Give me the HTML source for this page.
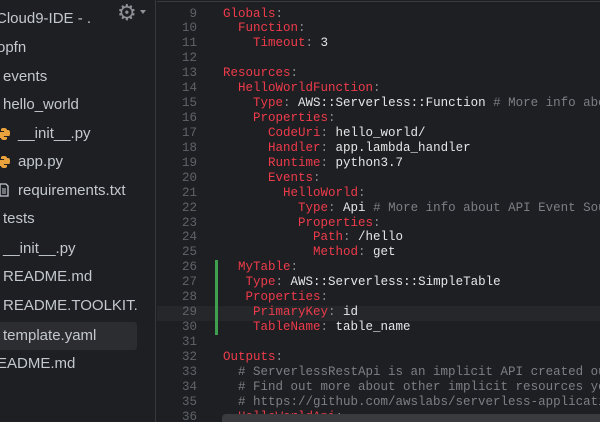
<!DOCTYPE html>
<html><head><meta charset="utf-8"><style>
*{margin:0;padding:0;box-sizing:border-box}
html,body{width:600px;height:422px;overflow:hidden}
body{background:#1e1f22;position:relative;font-family:"Liberation Sans",sans-serif}
#side{position:absolute;left:0;top:0;width:156px;height:422px;background:#1e1f22;border-right:1px solid #37383b;overflow:hidden}
.it{position:absolute;left:0;height:28px;line-height:28px;font-size:15px;color:#c3c8cf;white-space:nowrap}
.sel{background:#2c2d31;width:137px;border-radius:0 3px 3px 0}
.py{position:absolute;top:8px;width:12px;height:12px}
#ed{position:absolute;left:157px;top:1px;width:443px;height:421px;border-top:1px solid #3a3b3e;overflow:hidden}
.ln{position:absolute;left:0;width:40px;text-align:right;font-family:"Liberation Mono",monospace;font-size:12.5px;color:#5f6368}
.cd{position:absolute;left:66px;font-family:"Liberation Mono",monospace;font-size:12.5px;color:#e4e6e8;white-space:pre}
.k{color:#ee3b4b}.c{color:#7b7f85}.p{color:#8a8d92}
.hl{position:absolute;left:0;right:0;background:#26272a}
</style></head><body>
<div id="side">
<div class="it" style="top:5px;left:-4px">Cloud9-IDE - .</div>
<div style="position:absolute;left:117px;top:0px;color:#8e9298;font-size:22px">&#9881;</div>
<div style="position:absolute;left:140px;top:10px;width:0;height:0;border-left:3.5px solid transparent;border-right:3.5px solid transparent;border-top:4px solid #8e9298"></div>
<div class="it" style="top:34px;left:-3px">opfn</div>
<div class="it" style="top:63px;left:3px">events</div>
<div class="it" style="top:91px;left:3px">hello_world</div>
<svg class="py" style="left:-2px;top:128px" viewBox="0 0 12 12"><path d="M6 0C3 0 3 1 3 2v1h3v1H1C0 4 0 6 0 7s0 3 2 3h1V8c0-1 1-2 2-2h3c1 0 1-1 1-2V2C9 1 8 0 6 0z" fill="#e8a33d"/><path d="M6 12c3 0 3-1 3-2V9H6V8h5c1 0 1-2 1-3s0-3-2-3H9v2c0 1-1 2-2 2H4C3 6 3 7 3 8v2c0 1 1 2 3 2z" fill="#e8a33d"/></svg>
<div class="it" style="top:120px;left:18px">__init__.py</div>
<svg class="py" style="left:-2px;top:156px" viewBox="0 0 12 12"><path d="M6 0C3 0 3 1 3 2v1h3v1H1C0 4 0 6 0 7s0 3 2 3h1V8c0-1 1-2 2-2h3c1 0 1-1 1-2V2C9 1 8 0 6 0z" fill="#e8a33d"/><path d="M6 12c3 0 3-1 3-2V9H6V8h5c1 0 1-2 1-3s0-3-2-3H9v2c0 1-1 2-2 2H4C3 6 3 7 3 8v2c0 1 1 2 3 2z" fill="#e8a33d"/></svg>
<div class="it" style="top:148px;left:18px">app.py</div>
<svg style="position:absolute;left:-1px;top:183px" width="10" height="14" viewBox="0 0 10 14"><path d="M1 1h6l2 2v10H1z" fill="none" stroke="#c3c8cf" stroke-width="1.3"/><path d="M3 6h4M3 8h4M3 10h4" stroke="#c3c8cf"/></svg>
<div class="it" style="top:177px;left:18px">requirements.txt</div>
<div class="it" style="top:205px;left:3px">tests</div>
<div class="it" style="top:235px;left:3px">__init__.py</div>
<div class="it" style="top:263px;left:3px">README.md</div>
<div class="it" style="top:292px;left:3px">README.TOOLKIT.</div>
<div class="it sel" style="top:322px;left:0;padding-left:3px">template.yaml</div>
<div class="it" style="top:350px;left:-3px">EADME.md</div>
</div>
<div id="ed">
<div class="hl" style="top:304px;height:15px"></div>
<div style="position:absolute;left:58px;top:258px;width:3px;height:75px;background:#3f9f4f"></div>
<div id="lines"></div>
<div style="position:absolute;left:65px;top:412px;right:0;height:9px;background:#3a3b3e;border-radius:4px 0 0 0"></div>
</div>
<script>
var L=[
[9,'<span class=k>Globals</span><span class=p>:</span>'],
[10,'  <span class=k>Function</span><span class=p>:</span>'],
[11,'    <span class=k>Timeout</span><span class=p>:</span> 3'],
[12,''],
[13,'<span class=k>Resources</span><span class=p>:</span>'],
[14,'  <span class=k>HelloWorldFunction</span><span class=p>:</span>'],
[15,'    <span class=k>Type</span><span class=p>:</span> AWS::Serverless::Function <span class=c># More info about Function Resource</span>'],
[16,'    <span class=k>Properties</span><span class=p>:</span>'],
[17,'      <span class=k>CodeUri</span><span class=p>:</span> hello_world/'],
[18,'      <span class=k>Handler</span><span class=p>:</span> app.lambda_handler'],
[19,'      <span class=k>Runtime</span><span class=p>:</span> python3.7'],
[20,'      <span class=k>Events</span><span class=p>:</span>'],
[21,'        <span class=k>HelloWorld</span><span class=p>:</span>'],
[22,'          <span class=k>Type</span><span class=p>:</span> Api <span class=c># More info about API Event Source</span>'],
[23,'          <span class=k>Properties</span><span class=p>:</span>'],
[24,'            <span class=k>Path</span><span class=p>:</span> /hello'],
[25,'            <span class=k>Method</span><span class=p>:</span> get'],
[26,'  <span class=k>MyTable</span><span class=p>:</span>'],
[27,'   <span class=k>Type</span><span class=p>:</span> AWS::Serverless::SimpleTable'],
[28,'   <span class=k>Properties</span><span class=p>:</span>'],
[29,'    <span class=k>PrimaryKey</span><span class=p>:</span> id'],
[30,'    <span class=k>TableName</span><span class=p>:</span> table_name'],
[31,''],
[32,'<span class=k>Outputs</span><span class=p>:</span>'],
[33,'  <span class=c># ServerlessRestApi is an implicit API created out of Events</span>'],
[34,'  <span class=c># Find out more about other implicit resources you can reference</span>'],
[35,'  <span class=c># https://github.com/awslabs/serverless-application-model</span>'],
[36,'  <span class=k>HelloWorldApi</span><span class=p>:</span>']];
var h='';L.forEach(function(r,i){var t=(4.5+i*14.93).toFixed(1);h+='<div class=ln style="top:'+t+'px">'+r[0]+'</div><div class=cd style="top:'+t+'px">'+r[1]+'</div>';});
document.getElementById('lines').innerHTML=h;
</script>
</body></html>
